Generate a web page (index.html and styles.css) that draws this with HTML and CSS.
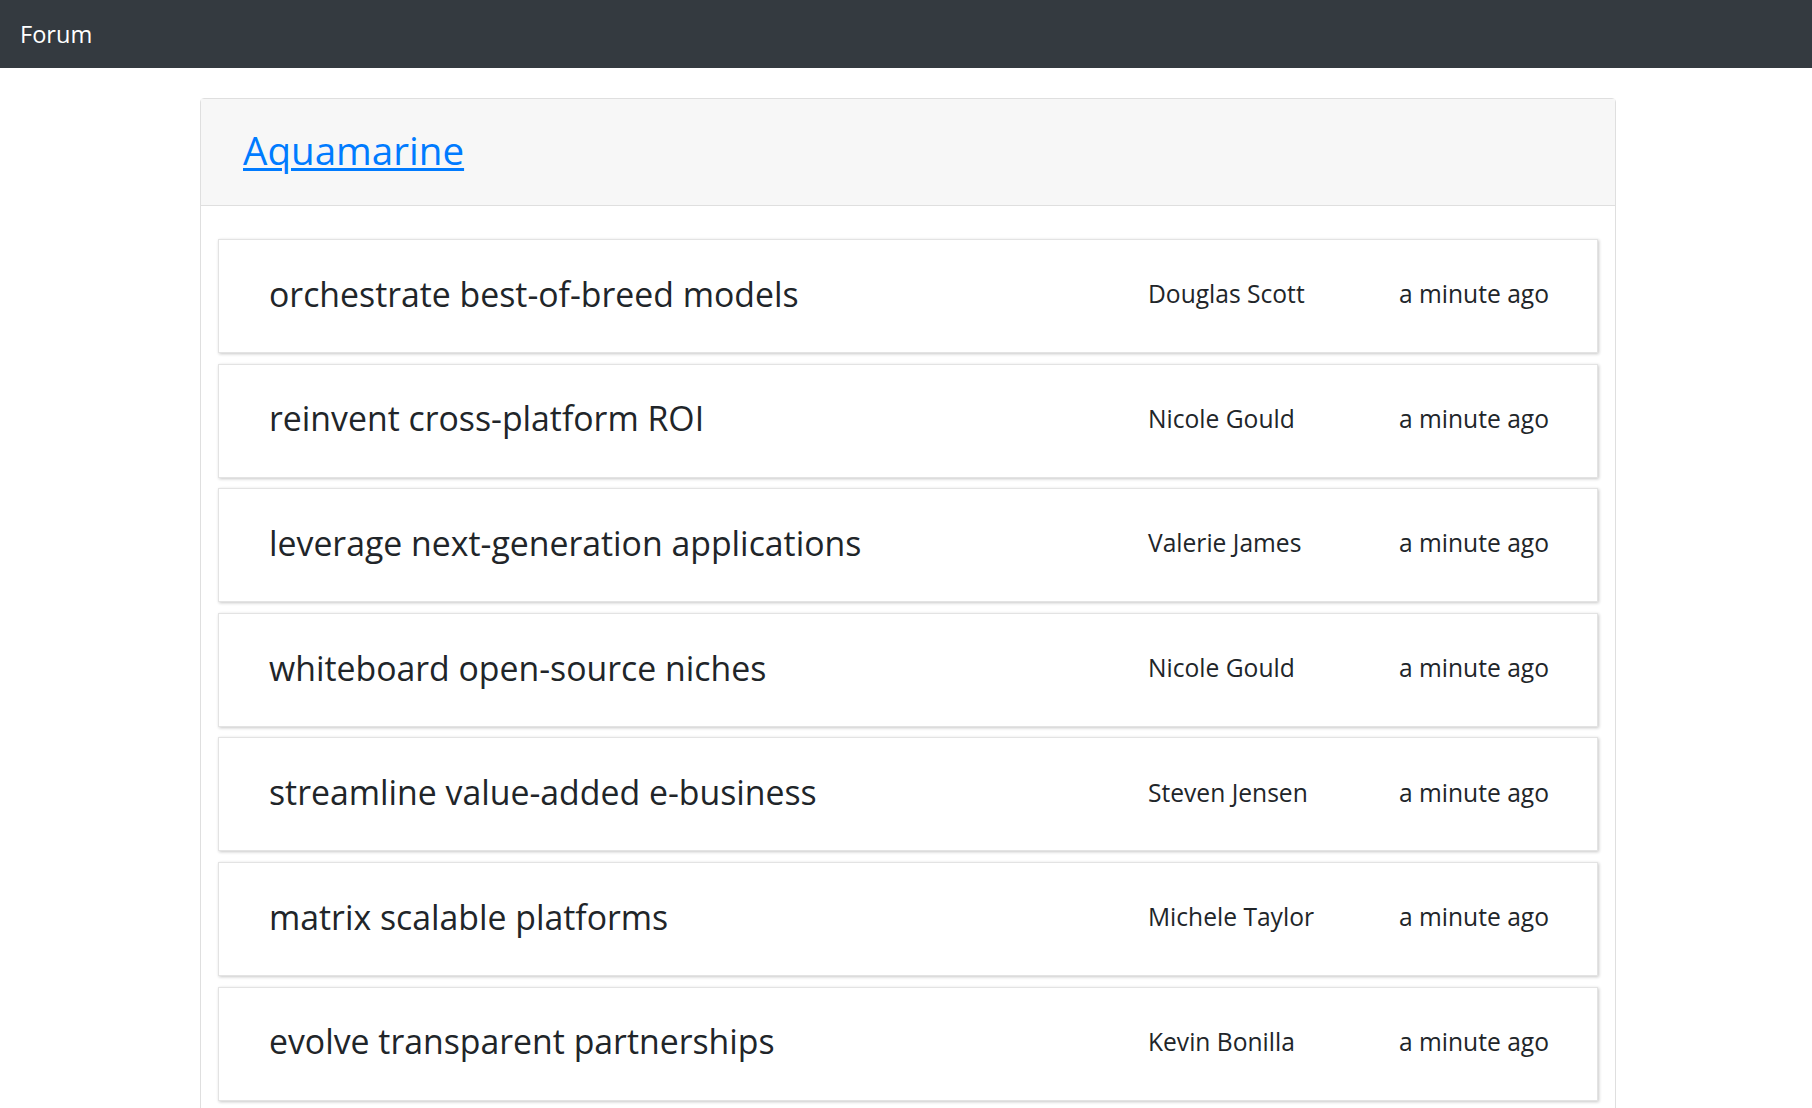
FILE: index.html
```html
<!DOCTYPE html>
<html lang="en">
<head>
<meta charset="utf-8">
<title>Forum</title>
<link rel="stylesheet" href="styles.css">
</head>
<body>
<nav class="navbar"><span class="brand">Forum</span></nav>
<main class="page">
  <section class="card">
    <header class="card-header">
      <h1 class="board-title"><a href="#">Aquamarine</a></h1>
    </header>
    <div class="card-body">
      <div class="thread"><div class="thread-title">orchestrate best-of-breed models</div><div class="thread-author">Douglas Scott</div><div class="thread-time">a minute ago</div></div>
      <div class="thread"><div class="thread-title">reinvent cross-platform ROI</div><div class="thread-author">Nicole Gould</div><div class="thread-time">a minute ago</div></div>
      <div class="thread"><div class="thread-title">leverage next-generation applications</div><div class="thread-author">Valerie James</div><div class="thread-time">a minute ago</div></div>
      <div class="thread"><div class="thread-title">whiteboard open-source niches</div><div class="thread-author">Nicole Gould</div><div class="thread-time">a minute ago</div></div>
      <div class="thread"><div class="thread-title">streamline value-added e-business</div><div class="thread-author">Steven Jensen</div><div class="thread-time">a minute ago</div></div>
      <div class="thread"><div class="thread-title">matrix scalable platforms</div><div class="thread-author">Michele Taylor</div><div class="thread-time">a minute ago</div></div>
      <div class="thread"><div class="thread-title">evolve transparent partnerships</div><div class="thread-author">Kevin Bonilla</div><div class="thread-time">a minute ago</div></div>
    </div>
  </section>
</main>
</body>
</html>
```

FILE: styles.css
```css
* { box-sizing: border-box; }
html, body { margin: 0; padding: 0; }
body {
  font-family: "Open Sans", "Noto Sans", sans-serif;
  color: #212529;
  background: #fff;
}
.navbar {
  height: 68px;
  background: #343a40;
  display: flex;
  align-items: center;
  padding: 2px 20px 0;
}
.brand {
  color: #fff;
  font-size: 23.6px;
  line-height: 1;
}
.page {
  padding: 30px 196px 0 200px;
}
.card {
  border: 1px solid #dfdfdf;
  border-radius: 4px;
  background: #fff;
}
.card-header {
  background: #f7f7f7;
  border-bottom: 1px solid #dfdfdf;
  height: 107px;
  padding: 0 42px 4px;
  display: flex;
  align-items: center;
}
.board-title {
  margin: 0;
  font-size: 38.6px;
  font-weight: 400;
  line-height: 1.2;
}
.board-title a {
  color: #007bff;
  text-decoration: underline;
  text-decoration-thickness: 3px;
  text-underline-offset: 3px;
}
.card-body {
  padding: 33px 17px 0 17px;
}
.thread {
  height: 114px;
  margin-bottom: 10.6px;
  border: 1px solid #e3e3e3;
  box-shadow: 1px 1px 3px rgba(0, 0, 0, 0.22);
  background: #fff;
  display: grid;
  grid-template-columns: 1fr 251px 198px;
  align-items: center;
  padding: 0 0 4px 50px;
}
.thread-title {
  font-size: 33.8px;
  line-height: 1.2;
}
.thread-author, .thread-time {
  font-size: 24.6px;
  line-height: 1.2;
}
```
